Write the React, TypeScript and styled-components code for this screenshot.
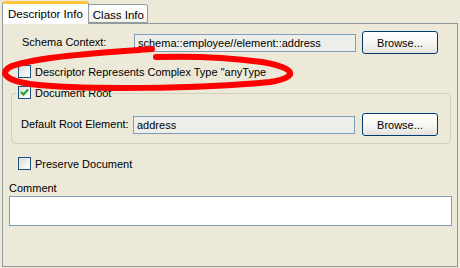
import React from "react";
import styled, { createGlobalStyle } from "styled-components";

const Global = createGlobalStyle`
  html, body { margin: 0; padding: 0; background: #ECE9D8; }
  body { font-family: "Liberation Sans", Arial, sans-serif; font-size: 11px; color: #000; }
`;

const Root = styled.div`
  position: relative;
  width: 460px;
  height: 268px;
  background: #ECE9D8;
  overflow: hidden;
`;

const TabBar = styled.div`
  display: flex;
  align-items: flex-end;
  height: 23px;
  padding: 0 0 0 2px;
`;

const Tab = styled.div<{ $active?: boolean }>`
  position: relative;
  z-index: ${(p) => (p.$active ? 2 : 1)};
  box-sizing: border-box;
  height: ${(p) => (p.$active ? "23px" : "19px")};
  margin-bottom: ${(p) => (p.$active ? "-1px" : "0")};
  padding: ${(p) => (p.$active ? "3px 5px 0 5px" : "3px 3px 0 4px")};
  border: 1px solid #919B9C;
  border-bottom: ${(p) => (p.$active ? "none" : "1px solid #919B9C")};
  border-top: ${(p) => (p.$active ? "3px solid #FFC83C" : "1px solid #919B9C")};
  border-radius: 3px 3px 0 0;
  background: ${(p) =>
    p.$active
      ? "linear-gradient(#FFFFFF, #FCFCFE)"
      : "linear-gradient(#FFFFFF, #F3F1EA)"};
  font-size: 11.5px;
  line-height: 14px;
  white-space: nowrap;
  margin-left: ${(p) => (p.$active ? "0" : "-1px")};
`;

const Panel = styled.div`
  box-sizing: border-box;
  margin-left: 2px;
  width: 456px;
  height: 244px;
  border: 1px solid #919B9C;
  background: #ECE9D8;
  padding: 7px 5px 0 6px;
  display: flex;
  flex-direction: column;
`;

const FieldRow = styled.div<{ $indent: number }>`
  display: flex;
  align-items: center;
  height: 23px;
  padding-left: ${(p) => p.$indent}px;
`;

const Label = styled.div`
  width: 112px;
  line-height: 13px;
  white-space: nowrap;
`;

const ReadOnlyField = styled.div`
  box-sizing: border-box;
  width: 222px;
  height: 18px;
  border: 1px solid #7F9DB9;
  background: #EEEEEA;
  padding: 0 3px;
  line-height: 16px;
  white-space: nowrap;
  overflow: hidden;
`;

const Button = styled.button<{ $gap: number }>`
  box-sizing: border-box;
  margin-left: ${(p) => p.$gap}px;
  width: 76px;
  height: 23px;
  border: 1px solid #003C74;
  border-radius: 3px;
  background: linear-gradient(#FFFFFF 0%, #F4F4F0 60%, #E3E1D8 100%);
  font-family: "Liberation Sans", Arial, sans-serif;
  font-size: 11px;
  color: #000;
  padding: 0;
`;

const CheckRow = styled.div<{ $top: number; $indent: number }>`
  display: flex;
  align-items: center;
  gap: 4px;
  height: 13px;
  margin-top: ${(p) => p.$top}px;
  padding-left: ${(p) => p.$indent}px;
  white-space: nowrap;
`;

const Box = styled.span`
  box-sizing: border-box;
  display: inline-flex;
  align-items: center;
  justify-content: center;
  width: 13px;
  height: 13px;
  border: 1px solid #1C5180;
  background: linear-gradient(135deg, #DCDCD7 0%, #F4F4F2 70%, #FFFFFF 100%);
  flex: none;
`;

const Group = styled.div`
  position: relative;
  box-sizing: border-box;
  margin: 15px 1px 0 2px;
  height: 51px;
  border: 1px solid #D0D0BF;
  border-radius: 4px;
  padding: 19px 0 0 9px;
`;

const Legend = styled.div`
  position: absolute;
  top: -8px;
  left: 4px;
  padding: 0 2px;
  background: #ECE9D8;
`;

const CommentLabel = styled.div`
  margin-top: 12px;
  line-height: 13px;
  height: 13px;
`;

const CommentArea = styled.div`
  box-sizing: border-box;
  margin-top: 1px;
  width: 443px;
  height: 30px;
  border: 1px solid #7F9DB9;
  background: #FFFFFF;
`;

const Annotation = styled.svg`
  position: absolute;
  left: 0;
  top: 0;
  pointer-events: none;
`;

const Check: React.FC<{ checked?: boolean }> = ({ checked }) => (
  <Box>
    {checked && (
      <svg width="9" height="9" viewBox="0 0 9 9">
        <path d="M1 4 L3.5 6.5 L8 1.5" fill="none" stroke="#21A121" strokeWidth="2" />
      </svg>
    )}
  </Box>
);

export default function App() {
  return (
    <Root>
      <Global />
      <TabBar>
        <Tab $active>Descriptor Info</Tab>
        <Tab>Class Info</Tab>
      </TabBar>
      <Panel>
        <FieldRow $indent={13}>
          <Label>Schema Context:</Label>
          <ReadOnlyField>schema::employee//element::address</ReadOnlyField>
          <Button $gap={6}>Browse...</Button>
        </FieldRow>
        <CheckRow $top={11} $indent={9}>
          <Check />
          <span>Descriptor Represents Complex Type "anyType</span>
        </CheckRow>
        <Group>
          <Legend>
            <CheckRow $top={0} $indent={0}>
              <Check checked />
              <span>Document Root</span>
            </CheckRow>
          </Legend>
          <FieldRow $indent={0}>
            <Label>Default Root Element:</Label>
            <ReadOnlyField>address</ReadOnlyField>
            <Button $gap={7}>Browse...</Button>
          </FieldRow>
        </Group>
        <CheckRow $top={13} $indent={9}>
          <Check />
          <span>Preserve Document</span>
        </CheckRow>
        <CommentLabel>Comment</CommentLabel>
        <CommentArea />
      </Panel>
      <Annotation width="460" height="268" viewBox="0 0 460 268">
        <path
          d="M152 49 C110 52, 40 56, 12 66 C-1 72, 4 80, 30 84 C80 90, 200 89, 270 82 C300 77, 296 68, 262 62 C232 58, 190 56, 156 57"
          fill="none"
          stroke="#FF0000"
          strokeWidth="6"
          strokeLinecap="round"
          strokeLinejoin="round"
        />
      </Annotation>
    </Root>
  );
}
